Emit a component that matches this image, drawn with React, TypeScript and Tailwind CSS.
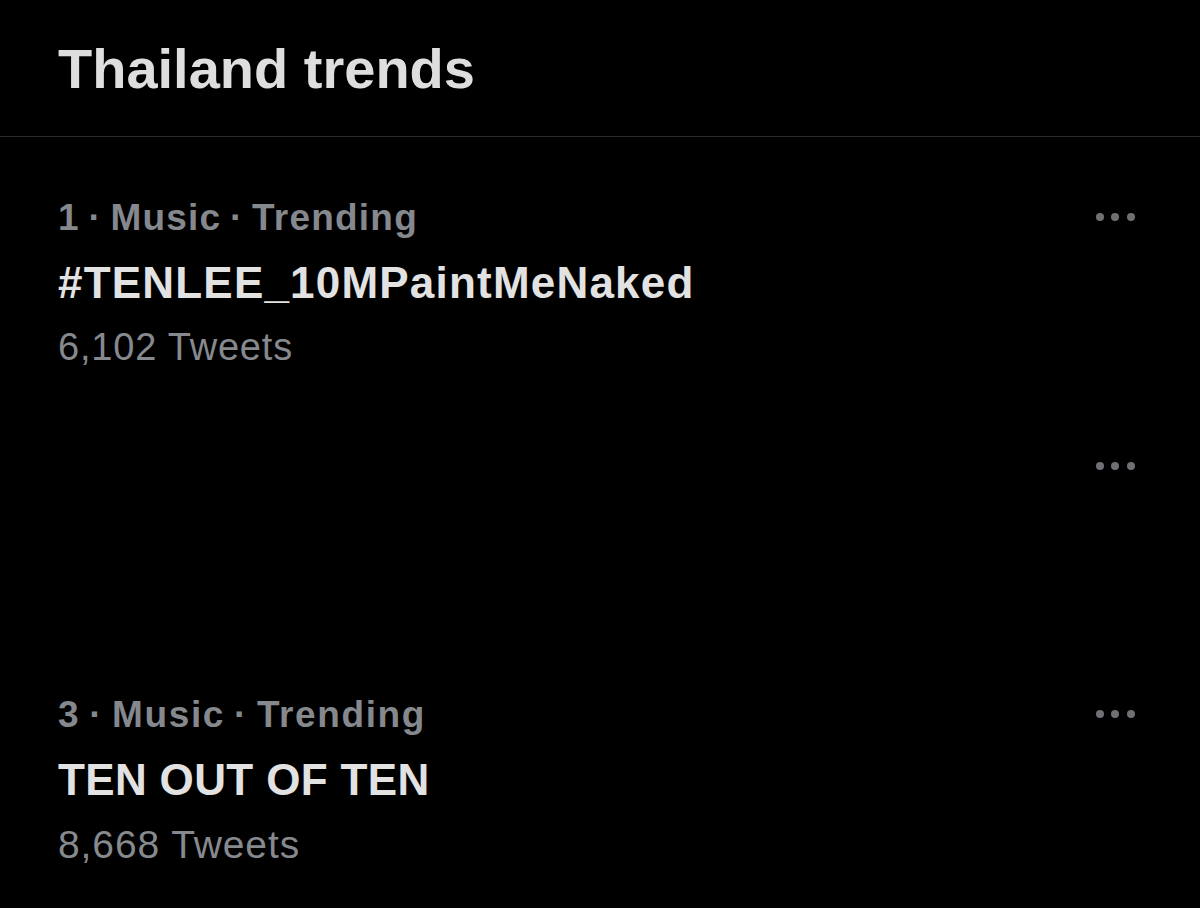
const trends = [
  {
    meta: "1\u2009·\u2009Music\u2009·\u2009Trending",
    title: "#TENLEE_10MPaintMeNaked",
    count: "6,102 Tweets",
    metaCls: "tracking-[1.2px]",
    titleCls: "tracking-[1.2px]",
    countCls: "text-[38px] tracking-[0.8px]",
  },
  null,
  {
    meta: "3\u2009·\u2009Music\u2009·\u2009Trending",
    title: "TEN OUT OF TEN",
    count: "8,668 Tweets",
    metaCls: "tracking-[1.6px]",
    titleCls: "tracking-[0.35px]",
    countCls: "text-[39px] tracking-[0.9px]",
  },
];

function MoreDots() {
  return (
    <svg width="40" height="10" viewBox="0 0 40 10" className="shrink-0">
      <circle cx="5" cy="5" r="4" fill="#6e7074" />
      <circle cx="20" cy="5" r="4" fill="#6e7074" />
      <circle cx="36" cy="5" r="4" fill="#6e7074" />
    </svg>
  );
}

export default function App() {
  return (
    <div
      className="w-[1200px] h-[908px] bg-black overflow-hidden"
      style={{ fontFamily: '"Liberation Sans", Arial, sans-serif' }}
    >
      {/* Header */}
      <div className="h-[137px] pl-[58px] pt-[41px] border-b border-[#2a2b31]">
        <h1 className="text-[56px] leading-none font-bold text-[#dedede]">
          Thailand trends
        </h1>
      </div>

      {/* Trends */}
      <div className="flex flex-col">
        {trends.map((t, i) => (
          <div key={i} className="h-[248.5px] pt-[62px] pl-[58px] pr-[65px] flex justify-between items-start">
            <div className="flex flex-col">
              {t && (
                <>
                  <div className={`text-[37px] leading-none font-bold text-[#85888d] ${t.metaCls}`}>
                    {t.meta}
                  </div>
                  <div className={`mt-[25px] text-[44px] leading-none font-bold text-[#e2e2e2] ${t.titleCls}`}>
                    {t.title}
                  </div>
                  <div className={`mt-[23px] leading-none text-[#86898e] ${t.countCls}`}>
                    {t.count}
                  </div>
                </>
              )}
            </div>
            <div className="mt-[13px]">
              <MoreDots />
            </div>
          </div>
        ))}
      </div>
    </div>
  );
}
